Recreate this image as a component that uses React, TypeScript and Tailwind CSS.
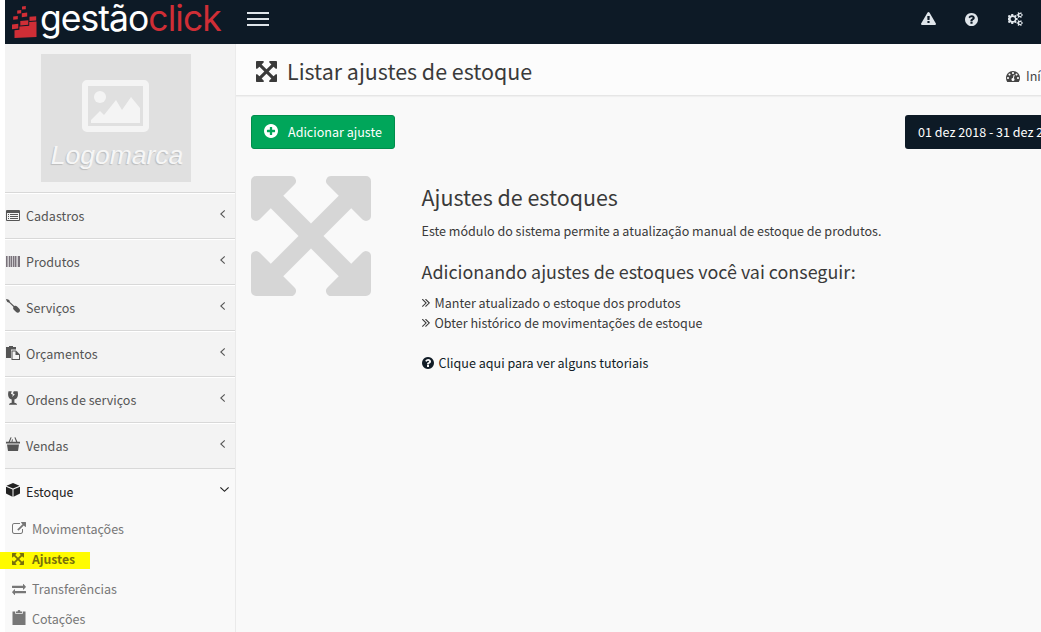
import React from "react";

const ICONS = {
  arrows: ["128 128 1536 1536", "M1411 541l-355 355 355 355 144-144q29-31 70-14 39 17 39 59v448q0 26-19 45t-45 19h-448q-42 0-59-40-17-39 14-69l144-144-355-355-355 355 144 144q31 30 14 69-17 40-59 40h-448q-26 0-45-19t-19-45v-448q0-42 40-59 39-17 69 14l144 144 355-355-355-355-144 144q-19 19-45 19-12 0-24-5-40-17-40-59v-448q0-26 19-45t45-19h448q42 0 59 40 17 39-14 69l-144 144 355 355 355-355-144-144q-31-30-14-69 17-40 59-40h448q26 0 45 19t19 45v448q0 42-39 59-13 5-25 5-26 0-45-19z"],
  question: ["128 128 1536 1536", "M1024 1376v-192q0-14-9-23t-23-9h-192q-14 0-23 9t-9 23v192q0 14 9 23t23 9h192q14 0 23-9t9-23zm256-672q0-88-55.5-163t-138.5-116-170-41q-243 0-371 213-15 24 8 42l132 100q7 6 19 6 16 0 25-12 53-68 86-92 34-24 86-24 48 0 85.5 26t37.5 59q0 38-20 61t-68 45q-63 28-115.5 86.5t-52.5 125.5v36q0 14 9 23t23 9h192q14 0 23-9t9-23q0-19 21.5-49.5t54.5-49.5q32-18 49-28.5t46-35 44.5-48 28-60.5 12.5-81zm384 192q0 209-103 385.5t-279.5 279.5-385.5 103-385.5-103-279.5-279.5-103-385.5 103-385.5 279.5-279.5 385.5-103 385.5 103 279.5 279.5 103 385.5z"],
  plus: ["128 128 1536 1536", "M1344 960v-128q0-26-19-45t-45-19h-256v-256q0-26-19-45t-45-19h-128q-26 0-45 19t-19 45v256h-256q-26 0-45 19t-19 45v128q0 26 19 45t45 19h256v256q0 26 19 45t45 19h128q26 0 45-19t19-45v-256h256q26 0 45-19t19-45zm320-64q0 209-103 385.5t-279.5 279.5-385.5 103-385.5-103-279.5-279.5-103-385.5 103-385.5 279.5-279.5 385.5-103 385.5 103 279.5 279.5 103 385.5z"],
  double: ["397 477 966 992", "M979 960q0 13-10 23l-466 466q-10 10-23 10t-23-10l-50-50q-10-10-10-23t10-23l393-393-393-393q-10-10-10-23t10-23l50-50q10-10 23-10t23 10l466 466q10 10 10 23zm384 0q0 13-10 23l-466 466q-10 10-23 10t-23-10l-50-50q-10-10-10-23t10-23l393-393-393-393q-10-10-10-23t10-23l50-50q10-10 23-10t23 10l466 466q10 10 10 23z"],
  left: ["597 451 606 1018", "M1203 544q0 13-10 23l-393 393 393 393q10 10 10 23t-10 23l-50 50q-10 10-23 10t-23-10l-466-466q-10-10-10-23t10-23l466-466q10-10 23-10t23 10l50 50q10 10 10 23z"],
  down: ["387 643 1018 606", "M1395 736q0 13-10 23l-466 466q-10 10-23 10t-23-10l-466-466q-10-10-10-23t10-23l50-50q10-10 23-10t23 10l393 393 393-393q10-10 23-10t23 10l50 50q10 10 10 23z"],
  external: ["0 0 1792 1540", "M1408 928v320q0 119-84.5 203.5t-203.5 84.5h-832q-119 0-203.5-84.5t-84.5-203.5v-832q0-119 84.5-203.5t203.5-84.5h704q14 0 23 9t9 23v64q0 14-9 23t-23 9h-704q-66 0-113 47t-47 113v832q0 66 47 113t113 47h832q66 0 113-47t47-113v-320q0-14 9-23t23-9h64q14 0 23 9t9 23zm384-864v512q0 26-19 45t-45 19-45-19l-176-176-652 652q-10 10-23 10t-23-10l-114-114q-10-10-10-23t10-23l652-652-176-176q-19-19-19-45t19-45 45-19h512q26 0 45 19t19 45z"],
  exchange: ["0 288 1792 1344", "M1792 1184v192q0 13-9.5 22.5t-22.5 9.5h-1376v192q0 13-9.5 22.5t-22.5 9.5q-12 0-24-10l-319-320q-9-9-9-22 0-14 9-23l320-320q9-9 23-9 13 0 22.5 9.5t9.5 22.5v192h1376q13 0 22.5 9.5t9.5 22.5zm0-544q0 14-9 23l-320 320q-9 9-23 9-13 0-22.5-9.5t-9.5-22.5v-192h-1376q-13 0-22.5-9.5t-9.5-22.5v-192q0-13 9.5-22.5t22.5-9.5h1376v-192q0-14 9-23t23-9q12 0 24 10l319 319q9 9 9 23z"],
  warning: ["0 0 1792 1664", "M1024 1375v-190q0-14-9.5-23.5t-22.5-9.5h-192q-13 0-22.5 9.5t-9.5 23.5v190q0 14 9.5 23.5t22.5 9.5h192q13 0 22.5-9.5t9.5-23.5zm-2-374l18-459q0-12-10-19-13-11-24-11h-220q-11 0-24 11-10 7-10 21l17 457q0 10 10 16.5t24 6.5h185q14 0 23.5-6.5t10.5-16.5zm-14-934l768 1408q35 63-2 126-17 29-46.5 46t-63.5 17h-1536q-34 0-63.5-17t-46.5-46q-37-63-2-126l768-1408q17-31 47-49t65-18 65 18 47 49z"],
  cogs: ["0 0 1920 1792", "M832 896q0-106-75-181t-181-75-181 75-75 181 75 181 181 75 181-75 75-181zm768 512q0-52-38-90t-90-38-90 38-38 90q0 53 37.5 90.5t90.5 37.5 90.5-37.5 37.5-90.5zm0-1024q0-52-38-90t-90-38-90 38-38 90q0 53 37.5 90.5t90.5 37.5 90.5-37.5 37.5-90.5zm-448 421v185q0 10-7 19.5t-16 10.5l-155 24q-11 35-32 76 34 48 90 115 7 11 7 20 0 12-7 19-23 30-82.5 89.5t-78.5 59.5q-11 0-21-7l-115-90q-37 19-77 31-11 108-23 155-7 24-30 24h-186q-11 0-20-7.5t-10-17.5l-23-153q-34-10-75-31l-118 89q-7 7-20 7-11 0-21-8-144-133-144-160 0-9 7-19 10-14 41-53t47-61q-23-44-35-82l-152-24q-10-1-17-9.5t-7-19.5v-185q0-10 7-19.5t16-10.5l155-24q11-35 32-76-34-48-90-115-7-11-7-20 0-12 7-20 22-30 82-89t79-59q11 0 21 7l115 90q34-18 77-32 11-108 23-154 7-24 30-24h186q11 0 20 7.5t10 17.5l23 153q34 10 75 31l118-89q8-7 20-7 11 0 21 8 144 133 144 160 0 8-7 19-12 16-42 54t-45 60q23 48 34 82l152 23q10 2 17 10.5t7 19.5zm640 533v140q0 16-149 31-12 27-30 52 51 113 51 138 0 4-4 7-122 71-124 71-8 0-46-47t-52-68q-20 2-30 2t-30-2q-14 21-52 68t-46 47q-2 0-124-71-4-3-4-7 0-25 51-138-18-25-30-52-149-15-149-31v-140q0-16 149-31 13-29 30-52-51-113-51-138 0-4 4-7 4-2 35-20t59-34 30-16q8 0 46 46.5t52 67.5q20-2 30-2t30 2q51-71 92-112l6-2q4 0 124 70 4 3 4 7 0 25-51 138 17 23 30 52 149 15 149 31zm0-1024v140q0 16-149 31-12 27-30 52 51 113 51 138 0 4-4 7-122 71-124 71-8 0-46-47t-52-68q-20 2-30 2t-30-2q-14 21-52 68t-46 47q-2 0-124-71-4-3-4-7 0-25 51-138-18-25-30-52-149-15-149-31v-140q0-16 149-31 13-29 30-52-51-113-51-138 0-4 4-7 4-2 35-20t59-34 30-16q8 0 46 46.5t52 67.5q20-2 30-2t30 2q51-71 92-112l6-2q4 0 124 70 4 3 4 7 0 25-51 138 17 23 30 52 149 15 149 31z"],
  gauge: ["0 256 1792 1408", "M384 1152q0-53-37.5-90.5t-90.5-37.5-90.5 37.5-37.5 90.5 37.5 90.5 90.5 37.5 90.5-37.5 37.5-90.5zm192-448q0-53-37.5-90.5t-90.5-37.5-90.5 37.5-37.5 90.5 37.5 90.5 90.5 37.5 90.5-37.5 37.5-90.5zm428 481l101-382q6-26-7.5-48.5t-38.5-29.5-48 6.5-30 39.5l-101 382q-60 5-107 43.5t-63 98.5q-20 77 20 146t117 89 146-20 89-117q16-60-6-117t-72-91zm660-33q0-53-37.5-90.5t-90.5-37.5-90.5 37.5-37.5 90.5 37.5 90.5 90.5 37.5 90.5-37.5 37.5-90.5zm-640-640q0-53-37.5-90.5t-90.5-37.5-90.5 37.5-37.5 90.5 37.5 90.5 90.5 37.5 90.5-37.5 37.5-90.5zm448 192q0-53-37.5-90.5t-90.5-37.5-90.5 37.5-37.5 90.5 37.5 90.5 90.5 37.5 90.5-37.5 37.5-90.5zm320 448q0 261-141 483-19 29-54 29h-1402q-35 0-54-29-141-221-141-483 0-182 71-348t191-286 286-191 348-71 348 71 286 191 191 286 71 348z"],
  list: ["0 0 14 11", "M1 0h12a1 1 0 0 1 1 1v9a1 1 0 0 1-1 1H1a1 1 0 0 1-1-1V1a1 1 0 0 1 1-1zM1 3v7h12V3zM2 4h1v1H2zM4 4h8v1H4zM2 6h1v1H2zM4 6h8v1H4zM2 8h1v1H2zM4 8h8v1H4z"],
  screwdriver: ["0 0 14 14", "M0 .6L.7 0l2.500 1.100.8 1.800 4.300 4.200c.9-.6 2-.5 2.800.3l2.200 2.300c.9 1 .9 2.400.1 3.300-.9.9-2.300.9-3.300 0l-2.300-2.200c-.8-.8-.9-1.800-.3-2.700L3.200 3.800 1.300 2.900z"],
  paste: ["0 0 14 14", "M0 1h3V0h4v1h3v2.500H5V12H0zM5.500 4.500H10l4 4V14H5.500zM6.500 5.500V13H13V9H9.500V5.500z"],
  glass: ["0 0 14 14", "M2.500.2h3.300l-.9 2.500 2 1-.8 2.300 2.700-2.600-1.900-1.100L7.800.2h3.800c1 3.700.2 7.500-3.200 8.300v3.300c1.700.1 2.700.9 2.700 2H3c0-1.100 1-1.900 2.700-2V8.500C2.200 7.700 1.500 3.900 2.500.2z"],
  basket: ["0 0 14 14", "M4.600.2l1 .4-1.700 4.200H2.600zM8.400.6l1-.4 2 4.600h-1.300zM6 2.200l.9.200-.5 2.400h-.9zM0 4.800h14v1.600H0zM1 7.400h12L12 14H2z"],
  cube: ["0 0 14 14", "M7 0l6.500 2.700L7 5.500.5 2.700zM0 3.800l6.500 2.700v7.300L.4 10.700A.8.8 0 0 1 0 10zM14 3.800V10a.8.8 0 0 1-.4.7l-6.100 3.100V6.500z"],
  clipboard: ["0 0 14 15", "M.5 1.500h2.700V3.700h7.600V1.500h2.700V15H.5zM4 2.900V1.400h1.600a1.400 1.400 0 0 1 2.800 0H10v1.500z"],
  barcode: ["0 0 14 12", "M0 0h1v12H0zM1.400 0h.9v12h-.9zM3 0h1.500v12H3zM5 0h1.300v12H5zM7 0h1.200v12H7zM8.700 0h1.300v12H8.700zM10.500 0h.8v12h-.8zM12 0h2v12h-2z"],
} satisfies Record<string, [string, string]>;

type IconName = keyof typeof ICONS;

function Icon({ name, className }: { name: IconName; className: string }) {
  const [box, d] = ICONS[name];
  return (
    <svg viewBox={box} preserveAspectRatio="none" fill="currentColor" fillRule="evenodd" className={`block shrink-0 ${className}`}>
      <path d={d} />
    </svg>
  );
}

const MENU: { label: string; icon: IconName; size: string }[] = [
  { label: "Cadastros", icon: "list", size: "w-[14px] h-[11px] mt-0" },
  { label: "Produtos", icon: "barcode", size: "w-[14px] h-[11px] mt-0 text-[#79727a]" },
  { label: "Serviços", icon: "screwdriver", size: "w-[14px] h-[14px] -mt-[3px]" },
  { label: "Orçamentos", icon: "paste", size: "w-[14px] h-[14px] -mt-px" },
  { label: "Ordens de serviços", icon: "glass", size: "w-[14px] h-[14px] -mt-[4px]" },
  { label: "Vendas", icon: "basket", size: "w-[14px] h-[14px] -mt-[4px]" },
];

const SUB: { label: string; icon: IconName; size: string; active?: boolean }[] = [
  { label: "Movimentações", icon: "external", size: "w-[14px] h-[12px] -mt-[3px]" },
  { label: "Ajustes", icon: "arrows", size: "w-[12px] h-[12px] mr-[2px] mt-0", active: true },
  { label: "Transferências", icon: "exchange", size: "w-[14px] h-[11px] mt-0" },
  { label: "Cotações", icon: "clipboard", size: "w-[14px] h-[15px] -mt-[4px]" },
];

function Logo() {
  return (
    <div className="flex h-[44px] w-[231px] shrink-0 pl-[7px]">
      <svg viewBox="0 0 26 34" className="mt-[5px] h-[34px] w-[26px] shrink-0" fill="#cf2e36">
        <path d="M10 1.400l3.800-.4v3.200l-3.800.4zM5.200 5.400l4-.4v3.300l-4 .4zM9.800 8.200l5.400-.6v4l-5.400.6zM1.200 11.400l4.600-.5v3.300l-4.600.5zM17.500 11.800l6.700-.6v4.300l-6.700.6zM8.300 16l8-.8v4.600l-8 .8zM0 19.400l6.300-.6v4.800l-6.300.6zM17.200 17l7.300-.6V32l-22 1v-7.700l4.900-.5v-3.200l9.800-.9z" />
      </svg>
      <div className="-mt-[2px] ml-[2px] h-[44px] whitespace-nowrap font-['Inter','Liberation_Sans',sans-serif] text-[35.500px] leading-[42px] tracking-[-0.98px] text-white">
        gestão<span className="text-[#cf2e36]">click</span>
      </div>
    </div>
  );
}

function Placeholder() {
  return (
    <div className="flex h-[128px] w-[150px] flex-col items-center bg-[#e0e0e0] pt-[26px]">
      <svg viewBox="0 0 67 52" className="-ml-[2px] h-[52px] w-[67px]">
        <rect x="3" y="3" width="61" height="46" rx="2" fill="none" stroke="#f4f4f4" strokeWidth="6" />
        <circle cx="18" cy="17" r="6" fill="#f4f4f4" />
        <path d="M9 43v-3l9-9 4 4 12-15 6 10 9-13 9 11v15z" fill="#f4f4f4" />
      </svg>
      <div className="ml-[2px] mt-[8px] font-['Liberation_Sans',sans-serif] text-[26.500px] italic leading-[30px] text-[#f6f6f6] [text-shadow:-1px_1px_1px_#bdbdbd]">
        Logomarca
      </div>
    </div>
  );
}

export default function App() {
  return (
    <div className="flex h-[632px] w-[1041px] flex-col overflow-hidden bg-white pl-[5px] font-['Noto_Sans_CJK_SC',sans-serif] text-[12.560px] text-[#3a3a3a]">
      <header className="flex h-[44px] shrink-0 bg-[#0d1a26] text-[#dfe5ea]">
        <Logo />
        <div className="ml-[11px] mt-[12px] flex w-[22px] flex-col gap-[4px]">
          <span className="h-[2px] bg-current" />
          <span className="h-[2px] bg-current" />
          <span className="h-[2px] bg-current" />
        </div>
        <div className="ml-auto flex h-[38px] items-center pr-[17px]">
          <Icon name="warning" className="-mt-px mr-[29px] h-[13px] w-[15px]" />
          <Icon name="question" className="mr-[30px] h-[13px] w-[13px]" />
          <Icon name="cogs" className="h-[14px] w-[16px]" />
        </div>
      </header>

      <div className="flex min-h-0 flex-1">
        <aside className="flex w-[231px] shrink-0 flex-col border-r border-[#eaeaea] bg-[#f3f3f3] text-[#555]">
          <div className="flex h-[148px] shrink-0 justify-center pr-[8px] pt-[10px]">
            <Placeholder />
          </div>
          <nav className="flex flex-col">
            {MENU.map((m) => (
              <div key={m.label} className="flex h-[46px] shrink-0 items-center border-t border-[#d8d8d8] pl-px pr-[10px] shadow-[inset_0_1px_0_#fff]">
                <Icon name={m.icon} className={m.size} />
                <span className="ml-[6px] mt-px leading-[20px]">{m.label}</span>
                <Icon name="left" className="-mt-[4px] ml-auto h-[8px] w-[5px]" />
              </div>
            ))}
            <div className="flex h-[46px] shrink-0 items-center border-t border-[#d8d8d8] bg-[#f9f9f9] pl-px pr-[6px] text-[#222]">
              <Icon name="cube" className="-mt-[4px] h-[14px] w-[14px]" />
              <span className="ml-[6px] mt-px leading-[20px]">Estoque</span>
              <Icon name="down" className="-mt-[5px] ml-auto h-[5px] w-[9px]" />
            </div>
          </nav>
          <nav className="flex flex-1 flex-col bg-[#f9f9f9] text-[#777]">
            {SUB.map((s) => (
              <div key={s.label} className="flex h-[30px] shrink-0 items-center">
                <div className={s.active ? "-ml-[5px] mt-[2px] flex h-[17px] w-[90px] items-center bg-[#fffb00] pb-[2px] pl-[12px] text-[12.200px] font-bold text-[#77700a]" : "flex items-center pl-[7px]"}>
                  <Icon name={s.icon} className={s.size} />
                  <span className="ml-[6px] leading-[20px]">{s.label}</span>
                </div>
              </div>
            ))}
          </nav>
        </aside>

        <main className="flex min-w-0 flex-1 flex-col bg-[#f9f9f9]">
          <div className="flex h-[52px] shrink-0 items-center border-b border-[#e6e6e6] bg-[#fcfcfc] pl-[20px] shadow-[0_1px_1px_#f0f0f0]">
            <Icon name="arrows" className="mt-[4px] h-[21px] w-[21px]" />
            <h1 className="ml-[10px] mt-[3px] whitespace-nowrap text-[21.440px] leading-[30px]">Listar ajustes de estoque</h1>
            <div className="ml-auto mt-[13px] flex w-[35px] items-center text-[#444]">
              <Icon name="gauge" className="h-[11px] w-[14px]" />
              <span className="ml-[6px] whitespace-nowrap leading-[20px]">Início</span>
            </div>
          </div>
          <div className="mt-[19px] flex shrink-0 justify-between pl-[15px]">
            <button className="flex h-[34px] w-[144px] items-center rounded-[3px] border border-[#008d4c] bg-[#00a65a] pl-[12px] text-white">
              <Icon name="plus" className="-mt-[2px] h-[14px] w-[14px]" />
              <span className="ml-[10px] whitespace-nowrap leading-[20px]">Adicionar ajuste</span>
            </button>
            <button className="flex h-[34px] w-[136px] items-center rounded-l-[3px] bg-[#0d1a26] pl-[13px] text-white">
              <span className="whitespace-nowrap leading-[20px]">01 dez 2018 - 31 dez 2018</span>
            </button>
          </div>
          <div className="flex pl-[15px] pt-[27px]">
            <Icon name="arrows" className="h-[120px] w-[120px] text-[#d6d6d6]" />
            <section className="ml-[50px] flex flex-col pl-[0.500px]">
              <h2 className="mt-[6px] text-[21.440px] leading-[30px]">Ajustes de estoques</h2>
              <p className="mt-[9px] leading-[20px]">Este módulo do sistema permite a atualização manual de estoque de produtos.</p>
              <h3 className="mt-[18px] text-[17.900px] leading-[24px]">Adicionando ajustes de estoques você vai conseguir:</h3>
              <ul className="mt-[10px]">
                {["Manter atualizado o estoque dos produtos", "Obter histórico de movimentações de estoque"].map((t) => (
                  <li key={t} className="flex items-center leading-[20px]">
                    <Icon name="double" className="mr-[5px] h-[8px] w-[8px]" />
                    {t}
                  </li>
                ))}
              </ul>
              <a className="mt-[20px] flex items-center leading-[20px] text-[#111c26]">
                <Icon name="question" className="mr-[5px] h-[12px] w-[12px]" />
                Clique aqui para ver alguns tutoriais
              </a>
            </section>
          </div>
        </main>
      </div>
    </div>
  );
}
